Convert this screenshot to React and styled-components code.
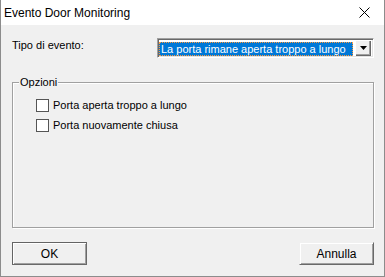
import React from "react";
import styled, { createGlobalStyle } from "styled-components";

const GlobalStyle = createGlobalStyle`
  html, body {
    margin: 0;
    padding: 0;
    background: #ffffff;
  }
  body {
    font-family: "Liberation Sans", Arial, sans-serif;
    font-size: 11px;
    color: #000;
  }
`;

const Window = styled.div`
  width: 385px;
  height: 277px;
  box-sizing: border-box;
  border: 1px solid #8c8c8c;
  border-top: none;
  display: flex;
  flex-direction: column;
  background: #f0f0f0;
`;

const TitleBar = styled.div`
  height: 25px;
  background: #fff;
  display: flex;
  align-items: center;
  justify-content: space-between;
  padding: 0 14px 0 3px;
  font-size: 12px;
  flex-shrink: 0;
`;

const Body = styled.div`
  flex: 1;
  display: flex;
  flex-direction: column;
  padding: 13px 10px 0 11px;
`;

const Row = styled.div`
  display: flex;
  align-items: center;
  justify-content: space-between;
`;

const Label = styled.span`
  margin-top: -6px;
  line-height: 13px;
`;

const Combo = styled.div`
  width: 217px;
  height: 20px;
  box-sizing: border-box;
  border-top: 1px solid #a0a0a0;
  border-left: 1px solid #a0a0a0;
  border-right: 1px solid #fff;
  border-bottom: 1px solid #fff;
  box-shadow: inset 1px 1px 0 #696969, inset -1px -1px 0 #e3e3e3;
  background: #fff;
  display: flex;
  align-items: center;
  padding: 1px 2px 1px 1px;
`;

const Selected = styled.div`
  flex: 1;
  height: 14px;
  margin-top: 1px;
  background: #0078d7;
  color: #fff;
  border: 1px dotted #ff9a3c;
  box-sizing: border-box;
  line-height: 12px;
  padding-left: 1px;
  white-space: nowrap;
  overflow: hidden;
`;

const ArrowButton = styled.div`
  width: 16px;
  height: 16px;
  margin-left: 2px;
  box-sizing: border-box;
  background: #f0f0f0;
  box-shadow: inset 1px 1px 0 #fff, inset -1px -1px 0 #696969,
    inset -2px -2px 0 #a0a0a0;
  display: flex;
  align-items: center;
  justify-content: center;
  padding-bottom: 1px;
`;

const GroupBox = styled.div`
  position: relative;
  margin-top: 24px;
  height: 146px;
  box-sizing: border-box;
  border: 1px solid #a0a0a0;
  box-shadow: 1px 1px 0 #fff, inset 1px 1px 0 #fff;
  padding: 12px 0 0 23px;
`;

const Caption = styled.span`
  position: absolute;
  top: -7px;
  left: 6px;
  padding: 0 1px;
  background: #f0f0f0;
  line-height: 13px;
`;

const Option = styled.label`
  display: flex;
  align-items: center;
  height: 20px;
  gap: 4px;
`;

const Box = styled.span`
  width: 13px;
  height: 13px;
  box-sizing: border-box;
  border: 1px solid #555;
  background: #fff;
`;

const Footer = styled.div`
  display: flex;
  justify-content: space-between;
  margin-top: 14px;
`;

const Button = styled.div`
  width: 75px;
  height: 23px;
  box-sizing: border-box;
  display: flex;
  align-items: center;
  justify-content: center;
  background: #f0f0f0;
  border: 1px solid ${(p) => (p.$default ? "#646464" : "#f0f0f0")};
  border-right-color: #696969;
  border-bottom-color: #696969;
  box-shadow: inset 1px 1px 0 #fff, inset -1px -1px 0 #a0a0a0;
  font-size: 12px;
`;

const CloseIcon = () => (
  <svg width="11" height="11" viewBox="0 0 11 11">
    <path d="M0.5 0.5 L10.5 10.5 M10.5 0.5 L0.5 10.5" stroke="#000" strokeWidth="1" />
  </svg>
);

const DownArrow = () => (
  <svg width="7" height="4" viewBox="0 0 7 4">
    <path d="M0 0 H7 L3.5 4 Z" fill="#000" />
  </svg>
);

export default function App() {
  return (
    <>
      <GlobalStyle />
      <Window>
        <TitleBar>
          <span>Evento Door Monitoring</span>
          <CloseIcon />
        </TitleBar>
        <Body>
          <Row>
            <Label>Tipo di evento:</Label>
            <Combo>
              <Selected>La porta rimane aperta troppo a lungo</Selected>
              <ArrowButton>
                <DownArrow />
              </ArrowButton>
            </Combo>
          </Row>
          <GroupBox>
            <Caption>Opzioni</Caption>
            <Option>
              <Box />
              Porta aperta troppo a lungo
            </Option>
            <Option>
              <Box />
              Porta nuovamente chiusa
            </Option>
          </GroupBox>
          <Footer>
            <Button $default>OK</Button>
            <Button>Annulla</Button>
          </Footer>
        </Body>
      </Window>
    </>
  );
}
